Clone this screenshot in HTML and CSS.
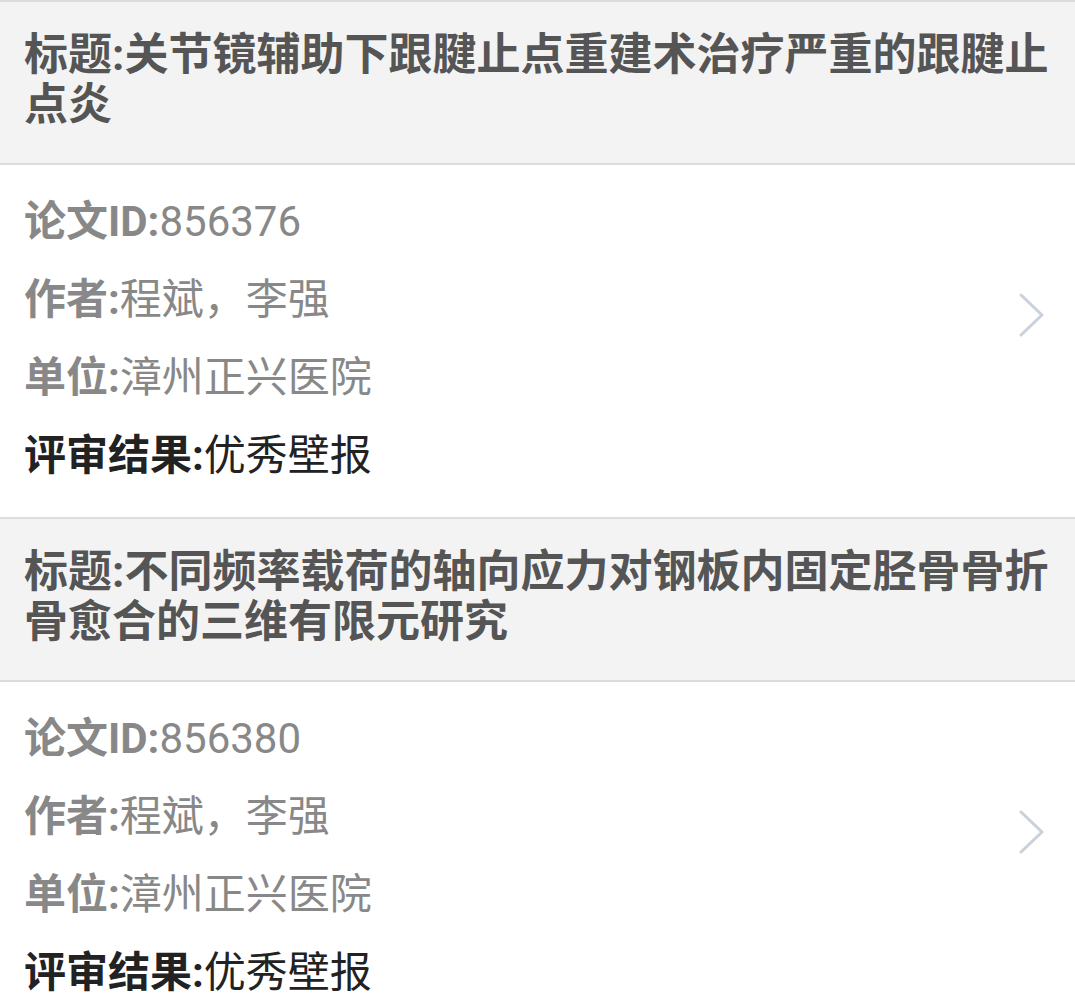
FILE: index.html
```html
<!DOCTYPE html>
<html>

<head>
  <meta charset="utf-8">
  <link rel="stylesheet" href="styles.css">
</head>

<body>
  <!-- review result list -->
  <div class="paper">
    <div class="paper-title">标题:关节镜辅助下跟腱止点重建术治疗严重的跟腱止点炎</div>
    <div class="paper-body">
      <div class="paper-info">
        <p class="row"><b>论文ID:</b>856376</p>
        <p class="row"><b>作者:</b>程斌，李强</p>
        <p class="row"><b>单位:</b>漳州正兴医院</p>
        <p class="row result"><b>评审结果:</b>优秀壁报</p>
      </div>
      <svg class="arrow" width="30" height="46" viewBox="0 0 30 46">
        <polyline points="4,3 25,23 4,43" fill="none" stroke="#c9d1dd" stroke-width="3" stroke-linecap="round" stroke-linejoin="round" />
      </svg>
    </div>
  </div>

  <div class="paper">
    <div class="paper-title">标题:不同频率载荷的轴向应力对钢板内固定胫骨骨折骨愈合的三维有限元研究</div>
    <div class="paper-body">
      <div class="paper-info">
        <p class="row"><b>论文ID:</b>856380</p>
        <p class="row"><b>作者:</b>程斌，李强</p>
        <p class="row"><b>单位:</b>漳州正兴医院</p>
        <p class="row result"><b>评审结果:</b>优秀壁报</p>
      </div>
      <svg class="arrow" width="30" height="46" viewBox="0 0 30 46">
        <polyline points="4,3 25,23 4,43" fill="none" stroke="#c9d1dd" stroke-width="3" stroke-linecap="round" stroke-linejoin="round" />
      </svg>
    </div>
  </div>
</body>

</html>
```

FILE: styles.css
```css
  body {
    margin: 0;
    background-color: #fff;
    font-family: Roboto, "Noto Sans CJK SC", sans-serif;
  }

  /* one paper card */
  .paper {
    border-top: 2px solid #dcdcdc;
  }

  .paper-title {
    background-color: #f3f3f3;
    border-bottom: 2px solid #dcdcdc;
    padding: 28px 14px 33px 24px;
    font-size: 44px;
    line-height: 50px;
    font-weight: bold;
    color: #555;
  }

  .paper-body {
    display: flex;
    justify-content: space-between;
    align-items: flex-start;
    padding: 18px 28px 22px 24px;
  }

  .row {
    margin: 0;
    font-size: 42px;
    line-height: 78px;
    color: #888;
    white-space: nowrap;
  }

  .row b {
    font-weight: bold;
  }

  /* the result line is darker */
  .row.result {
    color: #222;
  }

  .arrow {
    margin-top: 109px;
  }
```
